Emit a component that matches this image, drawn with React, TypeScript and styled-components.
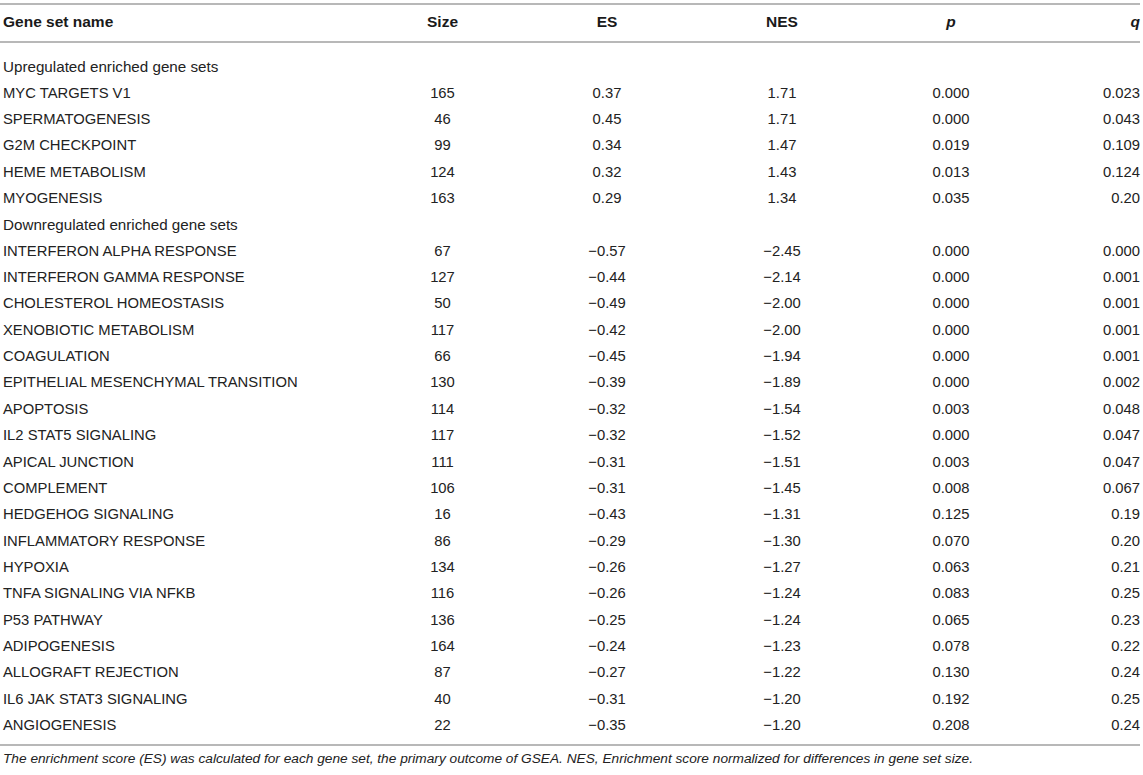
import React from "react";
import styled, { createGlobalStyle } from "styled-components";

const Global = createGlobalStyle`
  html, body { margin: 0; padding: 0; background: #fff; }
  body { font-family: "Liberation Sans", Arial, sans-serif; color: #222; }
`;

type Align = "left" | "center" | "right";

const Wrap = styled.div`
  width: 1140px;
  padding-top: 3px;
`;

const Table = styled.div`
  border-top: 2px solid #b8b8b8;
  border-bottom: 2px solid #b8b8b8;
`;

const Grid = styled.div`
  display: grid;
  grid-template-columns: 380px 125px 204px 146px 192px 93px;
`;

const Head = styled(Grid)`
  height: 38px;
  box-sizing: border-box;
  padding-bottom: 2px;
  align-items: center;
  border-bottom: 2px solid #b8b8b8;
  font-weight: bold;
  font-size: 15.5px;
  color: #1a1a1a;
`;

const Body = styled.div`
  padding: 10px 0 6px;
`;

const Row = styled(Grid)`
  height: 26.36px;
  align-items: center;
  font-size: 14.8px;
`;

const Cell = styled.div<{ $align: Align; $italic?: boolean }>`
  text-align: ${(p) => p.$align};
  font-style: ${(p) => (p.$italic ? "italic" : "normal")};
  padding-left: ${(p) => (p.$align === "left" ? "3px" : "0")};
  white-space: nowrap;
`;

const Section = styled.div`
  grid-column: 1 / -1;
  padding-left: 3px;
  font-size: 15.2px;
`;

const Note = styled.p`
  margin: 5px 0 0 3px;
  font-size: 13.7px;
  font-style: italic;
`;

const aligns: Align[] = ["left", "center", "center", "center", "center", "right"];

const up: string[][] = [
  ["MYC TARGETS V1", "165", "0.37", "1.71", "0.000", "0.023"],
  ["SPERMATOGENESIS", "46", "0.45", "1.71", "0.000", "0.043"],
  ["G2M CHECKPOINT", "99", "0.34", "1.47", "0.019", "0.109"],
  ["HEME METABOLISM", "124", "0.32", "1.43", "0.013", "0.124"],
  ["MYOGENESIS", "163", "0.29", "1.34", "0.035", "0.20"],
];

const down: string[][] = [
  ["INTERFERON ALPHA RESPONSE", "67", "−0.57", "−2.45", "0.000", "0.000"],
  ["INTERFERON GAMMA RESPONSE", "127", "−0.44", "−2.14", "0.000", "0.001"],
  ["CHOLESTEROL HOMEOSTASIS", "50", "−0.49", "−2.00", "0.000", "0.001"],
  ["XENOBIOTIC METABOLISM", "117", "−0.42", "−2.00", "0.000", "0.001"],
  ["COAGULATION", "66", "−0.45", "−1.94", "0.000", "0.001"],
  ["EPITHELIAL MESENCHYMAL TRANSITION", "130", "−0.39", "−1.89", "0.000", "0.002"],
  ["APOPTOSIS", "114", "−0.32", "−1.54", "0.003", "0.048"],
  ["IL2 STAT5 SIGNALING", "117", "−0.32", "−1.52", "0.000", "0.047"],
  ["APICAL JUNCTION", "111", "−0.31", "−1.51", "0.003", "0.047"],
  ["COMPLEMENT", "106", "−0.31", "−1.45", "0.008", "0.067"],
  ["HEDGEHOG SIGNALING", "16", "−0.43", "−1.31", "0.125", "0.19"],
  ["INFLAMMATORY RESPONSE", "86", "−0.29", "−1.30", "0.070", "0.20"],
  ["HYPOXIA", "134", "−0.26", "−1.27", "0.063", "0.21"],
  ["TNFA SIGNALING VIA NFKB", "116", "−0.26", "−1.24", "0.083", "0.25"],
  ["P53 PATHWAY", "136", "−0.25", "−1.24", "0.065", "0.23"],
  ["ADIPOGENESIS", "164", "−0.24", "−1.23", "0.078", "0.22"],
  ["ALLOGRAFT REJECTION", "87", "−0.27", "−1.22", "0.130", "0.24"],
  ["IL6 JAK STAT3 SIGNALING", "40", "−0.31", "−1.20", "0.192", "0.25"],
  ["ANGIOGENESIS", "22", "−0.35", "−1.20", "0.208", "0.24"],
];

const DataRow = ({ r }: { r: string[] }) => (
  <Row>
    {r.map((v, i) => (
      <Cell key={i} $align={aligns[i]}>
        {v}
      </Cell>
    ))}
  </Row>
);

export default function App() {
  return (
    <>
      <Global />
      <Wrap>
        <Table>
          <Head>
            <Cell $align="left">Gene set name</Cell>
            <Cell $align="center">Size</Cell>
            <Cell $align="center">ES</Cell>
            <Cell $align="center">NES</Cell>
            <Cell $align="center" $italic>p</Cell>
            <Cell $align="right" $italic>q</Cell>
          </Head>
          <Body>
            <Row>
              <Section>Upregulated enriched gene sets</Section>
            </Row>
            {up.map((r) => (
              <DataRow key={r[0]} r={r} />
            ))}
            <Row>
              <Section>Downregulated enriched gene sets</Section>
            </Row>
            {down.map((r) => (
              <DataRow key={r[0]} r={r} />
            ))}
          </Body>
        </Table>
        <Note>
          The enrichment score (ES) was calculated for each gene set, the primary outcome of GSEA. NES,
          Enrichment score normalized for differences in gene set size.
        </Note>
      </Wrap>
    </>
  );
}
